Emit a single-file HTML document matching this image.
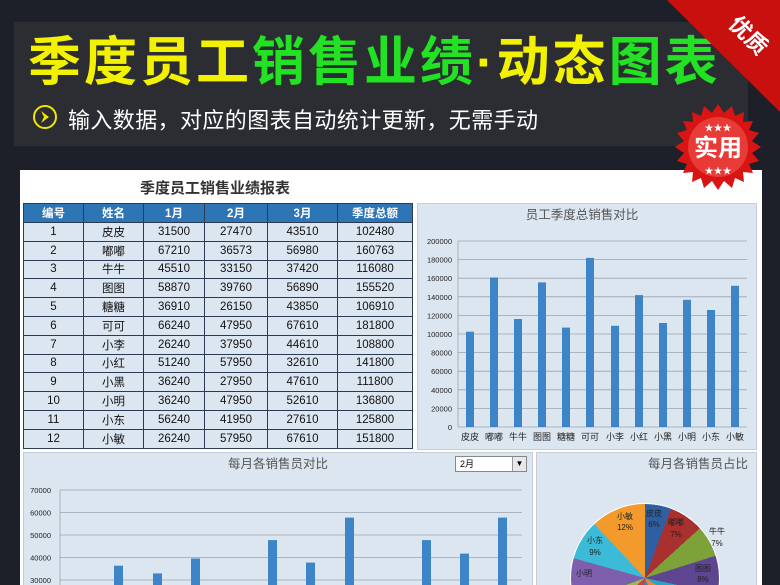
<!DOCTYPE html><html><head><meta charset="utf-8"><style>
*{margin:0;padding:0;box-sizing:border-box}
html,body{width:780px;height:585px;overflow:hidden}
body{background:#1d2029;position:relative;font-family:"Liberation Sans","Noto Sans CJK SC",sans-serif}
.a{position:absolute}
#banner{left:14px;top:22px;width:734px;height:124px;background:#2b2d32}
#t1{left:28px;top:30px;font-size:53px;font-weight:bold;letter-spacing:3px;white-space:nowrap;line-height:66px}
.y{color:#f2f200}.g{color:#23e123}
#sub{left:68px;top:103px;color:#fff;font-size:22px;letter-spacing:0.4px;white-space:nowrap}
#panel{left:20px;top:170px;width:742px;height:415px;background:#fff}
table{position:absolute;left:23px;top:203px;border-collapse:collapse;font-size:11.5px;color:#111}
td{border:1px solid #2b3a55;text-align:center;height:18.8px;background:#dce6f1;padding:0}
th{background:#2e75b6;color:#fff;font-weight:bold;height:19px;border:1px solid #2b3a55;font-size:11.5px}
.box{background:#dce6f1;border:1px solid #c6cdd6}
.tt{font-size:13px;color:#555;white-space:nowrap}
</style></head><body>
<div class="a" id="banner"></div>
<div class="a" id="t1"><span class="y">季度员工</span><span class="g">销售业绩</span><span class="y">·动态</span><span class="g">图表</span></div>
<svg class="a" style="left:32px;top:104px" width="26" height="26"><circle cx="13" cy="13" r="11" fill="none" stroke="#f2e600" stroke-width="2"/><path d="M9 7 L17 13 L9 19 L12 13Z" fill="#f2e600"/></svg>
<div class="a" id="sub">输入数据，对应的图表自动统计更新，无需手动</div>
<svg class="a" style="left:660px;top:0" width="120" height="115"><polygon points="7,0 120,0 120,112" fill="#c8100f"/><text x="86" y="42" transform="rotate(45 86 38)" font-size="22" font-weight="bold" fill="#fff" text-anchor="middle" font-family="Noto Sans CJK SC">优质</text></svg>
<div class="a" id="panel"></div>
<div class="a tt" style="left:140px;top:177px;font-size:15px;font-weight:bold;color:#333">季度员工销售业绩报表</div>
<table>
<tr><th style="width:60px">编号</th><th style="width:60px">姓名</th><th style="width:61px">1月</th><th style="width:63px">2月</th><th style="width:70px">3月</th><th style="width:75px">季度总额</th></tr>
<tr><td>1</td><td>皮皮</td><td>31500</td><td>27470</td><td>43510</td><td>102480</td></tr>
<tr><td>2</td><td>嘟嘟</td><td>67210</td><td>36573</td><td>56980</td><td>160763</td></tr>
<tr><td>3</td><td>牛牛</td><td>45510</td><td>33150</td><td>37420</td><td>116080</td></tr>
<tr><td>4</td><td>图图</td><td>58870</td><td>39760</td><td>56890</td><td>155520</td></tr>
<tr><td>5</td><td>糖糖</td><td>36910</td><td>26150</td><td>43850</td><td>106910</td></tr>
<tr><td>6</td><td>可可</td><td>66240</td><td>47950</td><td>67610</td><td>181800</td></tr>
<tr><td>7</td><td>小李</td><td>26240</td><td>37950</td><td>44610</td><td>108800</td></tr>
<tr><td>8</td><td>小红</td><td>51240</td><td>57950</td><td>32610</td><td>141800</td></tr>
<tr><td>9</td><td>小黑</td><td>36240</td><td>27950</td><td>47610</td><td>111800</td></tr>
<tr><td>10</td><td>小明</td><td>36240</td><td>47950</td><td>52610</td><td>136800</td></tr>
<tr><td>11</td><td>小东</td><td>56240</td><td>41950</td><td>27610</td><td>125800</td></tr>
<tr><td>12</td><td>小敏</td><td>26240</td><td>57950</td><td>67610</td><td>151800</td></tr>
</table>
<div class="a box" style="left:417px;top:203px;width:340px;height:247px"></div>
<div class="a box" style="left:23px;top:452px;width:510px;height:133px;border-bottom:none"></div>
<div class="a" style="left:455px;top:456px;width:72px;height:16px;background:#fff;border:1px solid #888;font-size:9px;line-height:14px;padding-left:4px">2月<div class="a" style="right:0;top:0;width:14px;height:14px;background:#e8e8e8;border-left:1px solid #999;font-size:8px;text-align:center">▼</div></div>
<div class="a" style="left:536px;top:452px;width:221px;height:133px;background:#dce6f1;border:1px solid #c6cdd6;border-bottom:none;overflow:hidden">
<div class="a" style="left:33px;top:50px;width:150px;height:150px;border-radius:50%;border:1px solid #fff;background:conic-gradient(#2f5fa3 0 20.5deg,#a8302f 20.5deg 47.8deg,#7ea23a 47.8deg 72.5deg,#5d4590 72.5deg 102.1deg,#2aa3c6 102.1deg 121.6deg,#f08a1e 121.6deg 157.4deg,#4b7cc2 157.4deg 185.7deg,#c44343 185.7deg 228.9deg,#97bb4f 228.9deg 249.8deg,#7d5fae 249.8deg 285.5deg,#3bbbd8 285.5deg 316.8deg,#f39a2c 316.8deg 360deg)"></div>
</div>
<svg class="a" style="left:0;top:0" width="780" height="585" font-family="Liberation Sans,Noto Sans CJK SC">
<text x="582" y="219" font-size="12.5" fill="#555" text-anchor="middle">员工季度总销售对比</text>
<g stroke="#9aa3ad" stroke-width="0.8">
<line x1="458" x2="747" y1="241" y2="241"/><line x1="458" x2="747" y1="259.6" y2="259.6"/><line x1="458" x2="747" y1="278.2" y2="278.2"/><line x1="458" x2="747" y1="296.8" y2="296.8"/><line x1="458" x2="747" y1="315.4" y2="315.4"/><line x1="458" x2="747" y1="334" y2="334"/><line x1="458" x2="747" y1="352.6" y2="352.6"/><line x1="458" x2="747" y1="371.2" y2="371.2"/><line x1="458" x2="747" y1="389.8" y2="389.8"/><line x1="458" x2="747" y1="408.4" y2="408.4"/><line x1="458" x2="747" y1="427" y2="427"/><line x1="458" x2="458" y1="241" y2="427"/>
</g>
<g font-size="7.5" fill="#222" text-anchor="end">
<text x="452" y="244">200000</text><text x="452" y="262.6">180000</text><text x="452" y="281.2">160000</text><text x="452" y="299.8">140000</text><text x="452" y="318.4">120000</text><text x="452" y="337">100000</text><text x="452" y="355.6">80000</text><text x="452" y="374.2">60000</text><text x="452" y="392.8">40000</text><text x="452" y="411.4">20000</text><text x="452" y="430">0</text>
</g>
<g fill="#3d85c6">
<rect x="466" y="331.7" width="8" height="95.3"/><rect x="490" y="277.5" width="8" height="149.5"/><rect x="514" y="319" width="8" height="108"/><rect x="538" y="282.4" width="8" height="144.6"/><rect x="562" y="327.6" width="8" height="99.4"/><rect x="586" y="257.9" width="8" height="169.1"/><rect x="611" y="325.8" width="8" height="101.2"/><rect x="635" y="295.1" width="8" height="131.9"/><rect x="659" y="323" width="8" height="104"/><rect x="683" y="299.8" width="8" height="127.2"/><rect x="707" y="310" width="8" height="117"/><rect x="731" y="285.8" width="8" height="141.2"/>
</g>
<g font-size="9" fill="#222" text-anchor="middle">
<text x="470" y="440">皮皮</text><text x="494" y="440">嘟嘟</text><text x="518" y="440">牛牛</text><text x="542" y="440">图图</text><text x="566" y="440">糖糖</text><text x="590" y="440">可可</text><text x="615" y="440">小李</text><text x="639" y="440">小红</text><text x="663" y="440">小黑</text><text x="687" y="440">小明</text><text x="711" y="440">小东</text><text x="735" y="440">小敏</text>
</g>
<text x="278" y="468" font-size="12.5" fill="#555" text-anchor="middle">每月各销售员对比</text>
<text x="698" y="468" font-size="12.5" fill="#555" text-anchor="middle">每月各销售员占比</text>
<g stroke="#9aa3ad" stroke-width="0.8">
<line x1="60" x2="522" y1="490" y2="490"/><line x1="60" x2="522" y1="512.5" y2="512.5"/><line x1="60" x2="522" y1="535" y2="535"/><line x1="60" x2="522" y1="557.5" y2="557.5"/><line x1="60" x2="522" y1="580" y2="580"/><line x1="60" x2="60" y1="490" y2="585"/>
</g>
<g font-size="7.5" fill="#222" text-anchor="end">
<text x="51" y="493">70000</text><text x="51" y="515.5">60000</text><text x="51" y="538">50000</text><text x="51" y="560.5">40000</text><text x="51" y="583">30000</text>
</g>
<g fill="#3d85c6">
<rect x="114" y="565.7" width="9" height="20"/><rect x="153" y="573.4" width="9" height="12"/><rect x="191" y="558.5" width="9" height="27"/><rect x="268" y="540.1" width="9" height="45"/><rect x="306" y="562.6" width="9" height="23"/><rect x="345" y="517.6" width="9" height="68"/><rect x="422" y="540.1" width="9" height="45"/><rect x="460" y="553.6" width="9" height="32"/><rect x="498" y="517.6" width="9" height="68"/>
</g>
<g font-size="8" fill="#222" text-anchor="middle">
<text x="654" y="516">皮皮</text><text x="654" y="527">6%</text>
<text x="676" y="525">嘟嘟</text><text x="676" y="537">7%</text>
<text x="717" y="534">牛牛</text><text x="717" y="546">7%</text>
<text x="703" y="571">图图</text><text x="703" y="582">8%</text>
<text x="625" y="519">小敏</text><text x="625" y="530">12%</text>
<text x="595" y="543">小东</text><text x="595" y="555">9%</text>
<text x="584" y="576">小明</text>
</g>
<g transform="translate(718,147)">
<polygon fill="#d81414" points="0,-43 6,-34 14,-41 17,-31 26,-35 25,-25 35,-26 31,-17 41,-14 34,-6 43,0 34,6 41,14 31,17 35,26 25,25 26,35 17,31 14,41 6,34 0,43 -6,34 -14,41 -17,31 -26,35 -25,25 -35,26 -31,17 -41,14 -34,6 -43,0 -34,-6 -41,-14 -31,-17 -35,-26 -25,-25 -26,-35 -17,-31 -14,-41 -6,-34"/>
<circle r="30" fill="#e83a36"/>
<text y="-16" font-size="9" fill="#fff" text-anchor="middle">★★★</text>
<text y="9" font-size="24" font-weight="bold" fill="#fff" text-anchor="middle">实用</text>
<text y="27" font-size="9" fill="#fff" text-anchor="middle">★★★</text>
</g>
</svg>
</body></html>
